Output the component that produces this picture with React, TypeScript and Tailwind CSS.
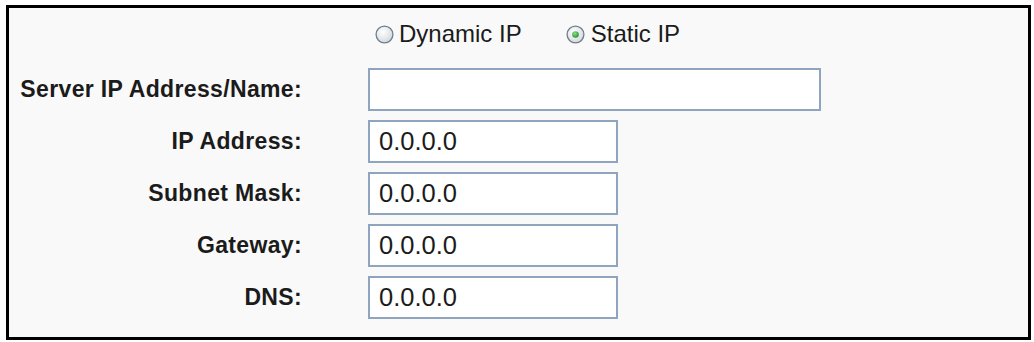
import React from 'react'

function Radio({ checked }: { checked?: boolean }) {
    return (
        <svg width="19" height="19" viewBox="0 0 19 19" className="shrink-0">
            <defs>
                <radialGradient id={checked ? 'rg-on' : 'rg-off'} cx="40%" cy="35%" r="70%">
                    <stop offset="0%" stopColor="#ffffff" />
                    <stop offset="100%" stopColor="#d2d6da" />
                </radialGradient>
                <radialGradient id="dot" cx="40%" cy="35%" r="70%">
                    <stop offset="0%" stopColor="#8ee08a" />
                    <stop offset="100%" stopColor="#1f8f2a" />
                </radialGradient>
            </defs>
            <circle cx="9.5" cy="9.5" r="8.4" fill={`url(#${checked ? 'rg-on' : 'rg-off'})`} stroke="#6f7f8e" strokeWidth="1.3" />
            {checked && <circle cx="9.5" cy="9.5" r="3.3" fill="url(#dot)" />}
        </svg>
    )
}

function Row({ label, value, wide }: { label: string; value?: string; wide?: boolean }) {
    return (
        <div className="flex flex-row items-center h-[43px]">
            <div className="w-[293px] text-right font-bold text-[23px] tracking-[0.35px] leading-none text-[#1b1b1b]">{label}</div>
            <div className={`ml-[66px] h-[43px] ${wide ? 'w-[453px]' : 'w-[250px]'} bg-white border-2 border-[#8ea4bf] pl-[9px] flex items-center text-[25.5px] leading-none text-[#1b1b1b]`}>
                {value}
            </div>
        </div>
    )
}

export default function App() {
    return (
        <div className="w-[1034px] h-[342px] bg-white pt-[5px] pl-[6px] font-['Liberation_Sans',Arial,sans-serif]">
            <div className="w-[1025px] h-[335px] border-[3px] border-black bg-[#f9f9f9] flex flex-col">
                <div className="flex flex-row items-center h-[28px] mt-[12px] pl-[366px] text-[24px] leading-none text-[#1b1b1b]">
                    <Radio />
                    <span className="ml-[5px]">Dynamic IP</span>
                    <span className="ml-[44px]"><Radio checked /></span>
                    <span className="ml-[6px]">Static IP</span>
                </div>
                <div className="flex flex-col gap-[9px] mt-[20px]">
                    <Row label="Server IP Address/Name:" wide />
                    <Row label="IP Address:" value="0.0.0.0" />
                    <Row label="Subnet Mask:" value="0.0.0.0" />
                    <Row label="Gateway:" value="0.0.0.0" />
                    <Row label="DNS:" value="0.0.0.0" />
                </div>
            </div>
        </div>
    )
}
